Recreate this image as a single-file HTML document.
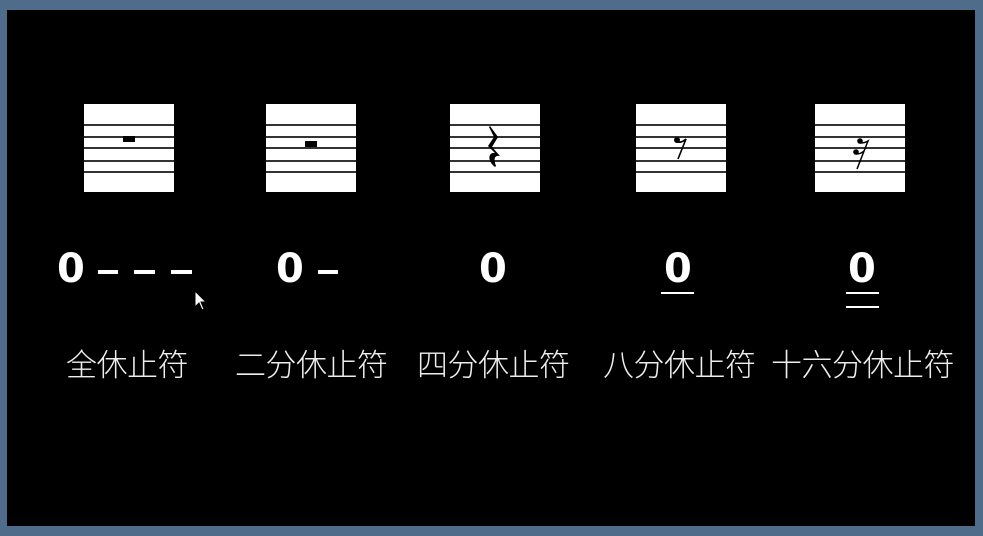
<!DOCTYPE html>
<html><head><meta charset="utf-8"><style>
body{margin:0;width:983px;height:536px;overflow:hidden;background:#4f6d8a;font-family:"Liberation Sans","Noto Sans CJK SC",sans-serif}
#s{position:absolute;left:7px;top:10px;width:968px;height:516px;background:#000}
.b{position:absolute;top:104px;width:90px;height:88px;background:#fff}
.l{position:absolute;left:0;width:100%;height:2px;background:#333}
.z{position:absolute;top:247px;color:#fff;font-weight:bold;font-size:40px;line-height:44px;font-family:"DejaVu Sans",sans-serif}
.d{position:absolute;height:4px;background:#fff;top:270px}
.u{position:absolute;height:2px;background:#fff}
.t{position:absolute;top:346px;color:#eee;font-size:31px;line-height:40px;font-family:"Liberation Sans","Noto Sans CJK SC",sans-serif;font-weight:300;letter-spacing:-0.5px}
</style></head><body>
<div id="s"></div>
<div class="b" style="left:84px"><div class="l" style="top:20px"></div><div class="l" style="top:32px"></div><div class="l" style="top:43px"></div><div class="l" style="top:56px"></div><div class="l" style="top:67px"></div><div style="position:absolute;left:39px;top:32px;width:12px;height:6px;background:#000"></div></div>
<div class="b" style="left:266px"><div class="l" style="top:20px"></div><div class="l" style="top:32px"></div><div class="l" style="top:43px"></div><div class="l" style="top:56px"></div><div class="l" style="top:67px"></div><div style="position:absolute;left:39px;top:37px;width:12px;height:6px;background:#000"></div></div>
<div class="b" style="left:450px"><div class="l" style="top:20px"></div><div class="l" style="top:32px"></div><div class="l" style="top:43px"></div><div class="l" style="top:56px"></div><div class="l" style="top:67px"></div>
<svg style="position:absolute;left:0;top:0" width="90" height="88"><path d="M40 22 L48 33 L42 43 L50 52 C45 51 43 54 46 62 L45 63 C37 57 38 48 45 49 L38 42 L44 33 L39 23 Z" fill="#000"/></svg></div>
<div class="b" style="left:636px"><div class="l" style="top:20px"></div><div class="l" style="top:32px"></div><div class="l" style="top:43px"></div><div class="l" style="top:56px"></div><div class="l" style="top:67px"></div>
<svg style="position:absolute;left:0;top:0" width="90" height="88"><circle cx="41" cy="36" r="3" fill="#000"/><path d="M41 38 Q46 39 50 35 L42 55" stroke="#000" stroke-width="1.6" fill="none"/></svg></div>
<div class="b" style="left:815px"><div class="l" style="top:20px"></div><div class="l" style="top:32px"></div><div class="l" style="top:43px"></div><div class="l" style="top:56px"></div><div class="l" style="top:67px"></div>
<svg style="position:absolute;left:0;top:0" width="90" height="88"><circle cx="45" cy="37" r="2.8" fill="#000"/><circle cx="41" cy="48" r="2.8" fill="#000"/><path d="M45 39 Q50 39 53 37 L42 65 M41 50 Q46 50 49 47" stroke="#000" stroke-width="1.5" fill="none"/></svg></div>
<div class="z" style="left:57px">0</div><div class="d" style="left:98px;width:20px"></div><div class="d" style="left:134px;width:21px"></div><div class="d" style="left:171px;width:21px"></div>
<div class="z" style="left:276px">0</div><div class="d" style="left:318px;width:20px"></div>
<div class="z" style="left:479px">0</div>
<div class="z" style="left:664px">0</div><div class="u" style="left:661px;top:292px;width:33px"></div>
<div class="z" style="left:848px">0</div><div class="u" style="left:846px;top:292px;width:33px"></div><div class="u" style="left:846px;top:306px;width:33px"></div>
<svg style="position:absolute;left:194px;top:290px" width="14" height="24"><path d="M1 1 L1 17 L5 13 L8 20 L10 19 L7 12 L12 12 Z" fill="#fff" stroke="#000" stroke-width="1"/></svg>
<div class="t" style="left:66px">全休止符</div>
<div class="t" style="left:235px">二分休止符</div>
<div class="t" style="left:417px">四分休止符</div>
<div class="t" style="left:603px">八分休止符</div>
<div class="t" style="left:771px">十六分休止符</div>
</body></html>
